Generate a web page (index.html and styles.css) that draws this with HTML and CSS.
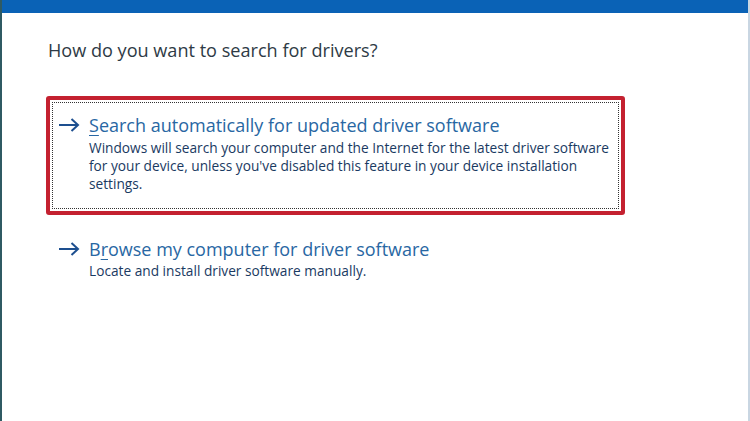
FILE: index.html
```html
<!DOCTYPE html>
<html>
<head>
<meta charset="utf-8">
<link rel="stylesheet" href="styles.css">
</head>
<body>
<div class="window">
  <div class="titlebar"></div>
  <div class="content">
    <h1 class="question">How do you want to search for drivers?</h1>
    <div class="option selected">
      <div class="focus">
        <svg class="arrow" width="22" height="14" viewBox="0 0 22 14"><path d="M1 7 H20 M13.5 1 L20 7 L13.5 13" fill="none" stroke="#1d4f8f" stroke-width="2"/></svg>
        <div class="text">
          <div class="title"><u>S</u>earch automatically for updated driver software</div>
          <div class="desc">Windows will search your computer and the Internet for the latest driver software for your device, unless you've disabled this feature in your device installation settings.</div>
        </div>
      </div>
    </div>
    <div class="option">
      <div class="focus">
        <svg class="arrow" width="22" height="14" viewBox="0 0 22 14"><path d="M1 7 H20 M13.5 1 L20 7 L13.5 13" fill="none" stroke="#1d4f8f" stroke-width="2"/></svg>
        <div class="text">
          <div class="title">B<u>r</u>owse my computer for driver software</div>
          <div class="desc">Locate and install driver software manually.</div>
        </div>
      </div>
    </div>
  </div>
</div>
</body>
</html>
```
FILE: styles.css
```css
html, body {
  margin: 0;
  padding: 0;
  background: #ffffff;
}
.window {
  width: 750px;
  height: 421px;
  box-sizing: border-box;
  border-left: 2px solid #2f5a63;
  border-right: 2px solid #c9d6e2;
  background: #ffffff;
  font-family: "Open Sans", "Noto Sans", sans-serif;
  overflow: hidden;
}
.titlebar {
  height: 13px;
  background: #0a62b6;
}
.content {
  padding: 25px 0 0 46px;
}
.question {
  margin: 0 0 34px 0;
  font-size: 18.1px;
  font-weight: normal;
  line-height: 24px;
  color: #2e3a45;
}
.option {
  width: 567px;
  border: 4px solid transparent;
  border-radius: 3px;
  padding: 2px;
  margin-left: -2px;
}
.option.selected {
  border-color: #c42130;
  margin-bottom: 5px;
}
.focus {
  display: flex;
  align-items: flex-start;
  padding: 10px 0 0 5px;
  border: 1px dotted transparent;
}
.selected .focus {
  border-color: #333333;
  height: 95px;
}
.arrow {
  margin-top: 5px;
  margin-right: 9px;
  flex: none;
}
.title {
  font-size: 18px;
  line-height: 24px;
  color: #2867a3;
}
.title u {
  text-decoration-thickness: 1px;
  text-underline-offset: 3px;
}
.desc {
  margin-top: 2px;
  font-size: 13.7px;
  line-height: 18px;
  color: #1a3a62;
  font-weight: 500;
}
.option:not(.selected) .desc {
  margin-top: 1px;
}
```
